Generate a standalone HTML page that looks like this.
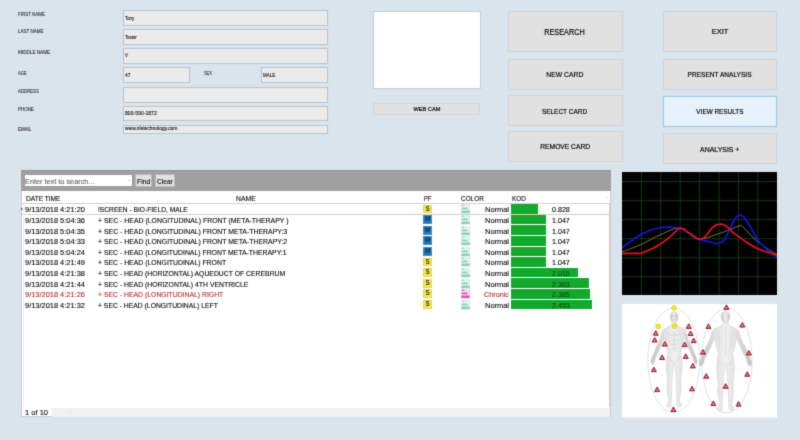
<!DOCTYPE html><html><head><meta charset="utf-8"><title>Card</title><style>
*{box-sizing:border-box;margin:0;padding:0}
html,body{width:800px;height:440px;overflow:hidden}
body{background:#d9e4ed;font-family:"Liberation Sans",sans-serif;color:#222;position:relative}
#root{position:absolute;left:0;top:0;width:800px;height:440px;will-change:transform;filter:url(#sb);background:#d9e4ed}
.a{position:absolute;white-space:nowrap}
.t{display:inline-block;white-space:nowrap}
.lbl{font-size:5px;color:#333;line-height:6px;-webkit-text-stroke:0.12px #333}
.fld{background:#ebebeb;border:1px solid #bac2cd}
.ft{font-size:4.7px;color:#111;-webkit-text-stroke:0.1px #111;line-height:6px}
.btn{background:#e1e1e1;border:1px solid #d0d5da}
.btn.sel{background:#e5f1fb;border-color:#9cc5e8}
.bt{color:#000;text-align:center;-webkit-text-stroke:0.18px #000}
.g{font-size:7.3px;line-height:10px;color:#000;-webkit-text-stroke:0.1px currentColor}
.red{color:#b02a2a}
</style></head><body><svg width="0" height="0" style="position:absolute"><filter id="sb" x="0" y="0" width="100%" height="100%" color-interpolation-filters="sRGB"><feConvolveMatrix order="3" kernelMatrix="0.0196 0.1008 0.0196 0.1008 0.5184 0.1008 0.0196 0.1008 0.0196" divisor="1" edgeMode="duplicate" preserveAlpha="true"/></filter></svg><div id="root">
<div class="a lbl" style="left:18.1px;top:11.30px"><span class="t" style="transform-origin:left center;transform:scaleX(0.8906)">FIRST NAME</span></div>
<div class="a lbl" style="left:18.1px;top:28.30px"><span class="t" style="transform-origin:left center;transform:scaleX(0.9062)">LAST NAME</span></div>
<div class="a lbl" style="left:18.1px;top:49.30px"><span class="t" style="transform-origin:left center;transform:scaleX(0.9242)">MIDDLE NAME</span></div>
<div class="a lbl" style="left:18.1px;top:70.30px"><span class="t" style="transform-origin:left center;transform:scaleX(0.8047)">AGE</span></div>
<div class="a lbl" style="left:18.1px;top:88.30px"><span class="t" style="transform-origin:left center;transform:scaleX(0.8641)">ADDRESS</span></div>
<div class="a lbl" style="left:18.1px;top:106.30px"><span class="t" style="transform-origin:left center;transform:scaleX(0.8886)">PHONE</span></div>
<div class="a lbl" style="left:18.1px;top:126.30px"><span class="t" style="transform-origin:left center;transform:scaleX(0.8857)">EMAIL</span></div>
<div class="a lbl" style="left:204.3px;top:70.30px"><span class="t" style="transform-origin:left center;transform:scaleX(0.7688)">SEX</span></div>
<div class="a fld" style="left:123.3px;top:10.4px;width:204.4px;height:15.2px"></div>
<div class="a fld" style="left:123.3px;top:29.4px;width:204.4px;height:15.2px"></div>
<div class="a fld" style="left:123.3px;top:47.5px;width:204.4px;height:16px"></div>
<div class="a fld" style="left:123.3px;top:66.8px;width:67px;height:16px"></div>
<div class="a fld" style="left:260.9px;top:66.8px;width:66.8px;height:16px"></div>
<div class="a fld" style="left:123.3px;top:86.5px;width:204.4px;height:16.2px"></div>
<div class="a fld" style="left:123.3px;top:105.8px;width:204.4px;height:15.7px"></div>
<div class="a fld" style="left:123.3px;top:124.5px;width:204.4px;height:9.1px"></div>
<div class="a ft" style="left:125.2px;top:15.80px"><span class="t" style="transform-origin:left center;transform:scaleX(0.9186)">Tony</span></div>
<div class="a ft" style="left:125.2px;top:34.80px"><span class="t" style="transform-origin:left center;transform:scaleX(0.9244)">Tester</span></div>
<div class="a ft" style="left:125.2px;top:52.80px"><span class="t" style="transform-origin:left center;transform:scaleX(0.9234)">V</span></div>
<div class="a ft" style="left:124.9px;top:72.80px"><span class="t" style="transform-origin:left center;transform:scaleX(1.0347)">47</span></div>
<div class="a ft" style="left:262.8px;top:72.80px"><span class="t" style="transform-origin:left center;transform:scaleX(0.9557)">MALE</span></div>
<div class="a ft" style="left:124.9px;top:110.80px"><span class="t" style="transform-origin:left center;transform:scaleX(1.0889)">800-590-1872</span></div>
<div class="a ft" style="left:124.9px;top:125.80px"><span class="t" style="transform-origin:left center;transform:scaleX(1.0566)">www.nlstechnology.com</span></div>
<div class="a" style="left:373px;top:11.4px;width:107.8px;height:78.1px;background:#fff;border:0.9px solid #c6ccd3"></div>
<div class="a btn" style="left:372.7px;top:102.7px;width:107.5px;height:12px"></div>
<div class="a bt" style="left:366.4px;width:120px;top:104.30px;font-size:5.4px;line-height:10px"><span class="t" style="transform-origin:center center;transform:scaleX(1.0479)">WEB CAM</span></div>
<div class="a btn" style="left:508px;top:10.8px;width:114.6px;height:41.2px"></div>
<div class="a bt" style="left:504.7px;width:120px;top:27.30px;font-size:8.8px;line-height:10px"><span class="t" style="transform-origin:center center;transform:scaleX(0.8304)">RESEARCH</span></div>
<div class="a btn" style="left:508px;top:58.7px;width:114.6px;height:31px"></div>
<div class="a bt" style="left:504.7px;width:120px;top:69.80px;font-size:7.3px;line-height:10px"><span class="t" style="transform-origin:center center;transform:scaleX(0.9337)">NEW CARD</span></div>
<div class="a btn" style="left:508px;top:95.4px;width:114.6px;height:30.8px"></div>
<div class="a bt" style="left:504.5px;width:120px;top:106.80px;font-size:7.3px;line-height:10px"><span class="t" style="transform-origin:center center;transform:scaleX(0.8868)">SELECT CARD</span></div>
<div class="a btn" style="left:508px;top:131.3px;width:114.6px;height:30.4px"></div>
<div class="a bt" style="left:504.7px;width:120px;top:141.80px;font-size:7.3px;line-height:10px"><span class="t" style="transform-origin:center center;transform:scaleX(0.9167)">REMOVE CARD</span></div>
<div class="a btn" style="left:662.8px;top:10.8px;width:114.2px;height:41px"></div>
<div class="a bt" style="left:659.8px;width:120px;top:26.80px;font-size:7.3px;line-height:10px"><span class="t" style="transform-origin:center center;transform:scaleX(1.0235)">EXIT</span></div>
<div class="a btn" style="left:662.8px;top:58.7px;width:114.2px;height:31px"></div>
<div class="a bt" style="left:659.9px;width:120px;top:69.80px;font-size:7.3px;line-height:10px"><span class="t" style="transform-origin:center center;transform:scaleX(0.8986)">PRESENT ANALYSIS</span></div>
<div class="a btn sel" style="left:662.8px;top:95.5px;width:114.2px;height:31.4px"></div>
<div class="a bt" style="left:659.9px;width:120px;top:106.80px;font-size:7.3px;line-height:10px"><span class="t" style="transform-origin:center center;transform:scaleX(0.8755)">VIEW RESULTS</span></div>
<div class="a btn" style="left:662.8px;top:133.3px;width:114.2px;height:31px"></div>
<div class="a bt" style="left:659.6px;width:120px;top:144.80px;font-size:7.3px;line-height:10px"><span class="t" style="transform-origin:center center;transform:scaleX(0.9508)">ANALYSIS +</span></div>
<div class="a" style="left:20.5px;top:169.5px;width:590px;height:247.3px;background:#fff;border:1px solid #c5ccd6;border-top:none"></div>
<div class="a" style="left:20.5px;top:169.5px;width:590px;height:21.8px;background:#a0a0a0;border-top:1px solid #8f969d"></div>
<div class="a" style="left:24px;top:174.4px;width:108.9px;height:12.6px;background:#fff;border:1px solid #9a9a9a"></div>
<div class="a g" style="left:25px;top:176.80px;color:#5e5e5e"><span class="t" style="transform-origin:left center;transform:scaleX(1.0020)">Enter text to search...</span></div>
<div class="a" style="left:127.6px;top:179.8px;width:0;height:0;border-left:1.6px solid transparent;border-right:1.6px solid transparent;border-top:1.8px solid #aaa"></div>
<div class="a" style="left:134.7px;top:174px;width:17.8px;height:13.2px;background:#e2e2e2;border:1px solid #b9b9b9"></div>
<div class="a g" style="left:136.75px;top:176.80px"><span class="t" style="transform-origin:left center;transform:scaleX(0.9329)">Find</span></div>
<div class="a" style="left:155.2px;top:174px;width:19.8px;height:13.2px;background:#e2e2e2;border:1px solid #b9b9b9"></div>
<div class="a g" style="left:156.75px;top:176.80px"><span class="t" style="transform-origin:left center;transform:scaleX(0.9032)">Clear</span></div>
<div class="a g" style="left:25.5px;top:193.8px"><span class="t" style="transform-origin:left center;transform:scaleX(0.9020)">DATE TIME</span></div>
<div class="a g" style="left:236.2px;top:193.8px"><span class="t" style="transform-origin:left center;transform:scaleX(0.9339)">NAME</span></div>
<div class="a g" style="left:424.2px;top:193.8px"><span class="t" style="transform-origin:left center;transform:scaleX(0.8040)">PF</span></div>
<div class="a g" style="left:460.6px;top:193.8px"><span class="t" style="transform-origin:left center;transform:scaleX(0.8785)">COLOR</span></div>
<div class="a g" style="left:512px;top:193.8px"><span class="t" style="transform-origin:left center;transform:scaleX(0.8854)">KOD</span></div>
<div class="a" style="left:606px;top:196.6px;width:0;height:0;border-top:1.3px solid transparent;border-bottom:1.3px solid transparent;border-right:1.6px solid #c4c4c4"></div>
<div class="a g" style="left:24.5px;top:204.80px"><span class="t" style="transform-origin:left center;transform:scaleX(1.0180)">9/13/2018 4:21:20</span></div>
<div class="a g" style="left:97.8px;top:204.80px"><span class="t" style="transform-origin:left center;transform:scaleX(0.9114)">!SCREEN - BIO-FIELD, MALE</span></div>
<div class="a" style="left:423.3px;top:204.60px;width:8.7px;height:8.8px;background:#f6ea48;border:1px solid #e3d655;font-size:6.4px;font-weight:bold;line-height:6.9px;text-align:center;color:#333">S</div>
<svg class="a" style="left:460.8px;top:204.40px" width="9" height="10" viewBox="0 0 9 10"><rect width="9" height="10" fill="#e3f3ee"/><rect x="0.8" y="0.6" width="2.4" height="1.1" fill="#86d0b4"/><rect x="0.8" y="3.6" width="5.6" height="1.7" fill="#86d0b4"/><rect x="0.3" y="6.6" width="8.6" height="2.3" fill="#86d0b4"/><rect x="8.6" y="0" width="0.4" height="10" fill="#c9d3d0"/></svg>
<div class="a g" style="left:485.4px;top:204.80px"><span class="t" style="transform-origin:left center;transform:scaleX(1.0206)">Normal</span></div>
<div class="a" style="left:511px;top:204.20px;width:27.3px;height:9.6px;background:#14a82c"></div>
<div class="a g" style="left:551.6px;top:204.80px;color:#000"><span class="t" style="transform-origin:left center;transform:scaleX(0.9745)">0.828</span></div>
<div class="a g" style="left:24.5px;top:215.80px"><span class="t" style="transform-origin:left center;transform:scaleX(1.0180)">9/13/2018 5:04:36</span></div>
<div class="a g" style="left:97.8px;top:215.80px"><span class="t" style="transform-origin:left center;transform:scaleX(0.9464)">+ SEC - HEAD (LONGITUDINAL) FRONT (META-THERAPY )</span></div>
<div class="a" style="left:423.3px;top:215.20px;width:8.7px;height:8.8px;background:#2679bb;border:1px solid #3a8fc8;font-size:6.4px;font-weight:bold;line-height:6.9px;text-align:center;color:#10324f">M</div>
<svg class="a" style="left:460.8px;top:215.00px" width="9" height="10" viewBox="0 0 9 10"><rect width="9" height="10" fill="#e3f3ee"/><rect x="0.8" y="0.6" width="2.4" height="1.1" fill="#86d0b4"/><rect x="0.8" y="3.6" width="5.6" height="1.7" fill="#86d0b4"/><rect x="0.3" y="6.6" width="8.6" height="2.3" fill="#86d0b4"/><rect x="8.6" y="0" width="0.4" height="10" fill="#c9d3d0"/></svg>
<div class="a g" style="left:485.4px;top:215.80px"><span class="t" style="transform-origin:left center;transform:scaleX(1.0206)">Normal</span></div>
<div class="a" style="left:511px;top:214.80px;width:34.6px;height:9.6px;background:#14a82c"></div>
<div class="a g" style="left:551.6px;top:215.80px;color:#000"><span class="t" style="transform-origin:left center;transform:scaleX(0.9745)">1.047</span></div>
<div class="a g" style="left:24.5px;top:226.80px"><span class="t" style="transform-origin:left center;transform:scaleX(1.0180)">9/13/2018 5:04:35</span></div>
<div class="a g" style="left:97.8px;top:226.80px"><span class="t" style="transform-origin:left center;transform:scaleX(0.9450)">+ SEC - HEAD (LONGITUDINAL) FRONT META-THERAPY:3</span></div>
<div class="a" style="left:423.3px;top:225.80px;width:8.7px;height:8.8px;background:#2679bb;border:1px solid #3a8fc8;font-size:6.4px;font-weight:bold;line-height:6.9px;text-align:center;color:#10324f">M</div>
<svg class="a" style="left:460.8px;top:225.60px" width="9" height="10" viewBox="0 0 9 10"><rect width="9" height="10" fill="#e3f3ee"/><rect x="0.8" y="0.6" width="2.4" height="1.1" fill="#86d0b4"/><rect x="0.8" y="3.6" width="5.6" height="1.7" fill="#86d0b4"/><rect x="0.3" y="6.6" width="8.6" height="2.3" fill="#86d0b4"/><rect x="8.6" y="0" width="0.4" height="10" fill="#c9d3d0"/></svg>
<div class="a g" style="left:485.4px;top:226.80px"><span class="t" style="transform-origin:left center;transform:scaleX(1.0206)">Normal</span></div>
<div class="a" style="left:511px;top:225.40px;width:34.6px;height:9.6px;background:#14a82c"></div>
<div class="a g" style="left:551.6px;top:226.80px;color:#000"><span class="t" style="transform-origin:left center;transform:scaleX(0.9745)">1.047</span></div>
<div class="a g" style="left:24.5px;top:236.80px"><span class="t" style="transform-origin:left center;transform:scaleX(1.0180)">9/13/2018 5:04:33</span></div>
<div class="a g" style="left:97.8px;top:236.80px"><span class="t" style="transform-origin:left center;transform:scaleX(0.9450)">+ SEC - HEAD (LONGITUDINAL) FRONT META-THERAPY:2</span></div>
<div class="a" style="left:423.3px;top:236.40px;width:8.7px;height:8.8px;background:#2679bb;border:1px solid #3a8fc8;font-size:6.4px;font-weight:bold;line-height:6.9px;text-align:center;color:#10324f">M</div>
<svg class="a" style="left:460.8px;top:236.20px" width="9" height="10" viewBox="0 0 9 10"><rect width="9" height="10" fill="#e3f3ee"/><rect x="0.8" y="0.6" width="2.4" height="1.1" fill="#86d0b4"/><rect x="0.8" y="3.6" width="5.6" height="1.7" fill="#86d0b4"/><rect x="0.3" y="6.6" width="8.6" height="2.3" fill="#86d0b4"/><rect x="8.6" y="0" width="0.4" height="10" fill="#c9d3d0"/></svg>
<div class="a g" style="left:485.4px;top:236.80px"><span class="t" style="transform-origin:left center;transform:scaleX(1.0206)">Normal</span></div>
<div class="a" style="left:511px;top:236.00px;width:34.6px;height:9.6px;background:#14a82c"></div>
<div class="a g" style="left:551.6px;top:236.80px;color:#000"><span class="t" style="transform-origin:left center;transform:scaleX(0.9745)">1.047</span></div>
<div class="a g" style="left:24.5px;top:247.80px"><span class="t" style="transform-origin:left center;transform:scaleX(1.0180)">9/13/2018 5:04:24</span></div>
<div class="a g" style="left:97.8px;top:247.80px"><span class="t" style="transform-origin:left center;transform:scaleX(0.9420)">+ SEC - HEAD (LONGITUDINAL) FRONT META-THERAPY:1</span></div>
<div class="a" style="left:423.3px;top:247.00px;width:8.7px;height:8.8px;background:#2679bb;border:1px solid #3a8fc8;font-size:6.4px;font-weight:bold;line-height:6.9px;text-align:center;color:#10324f">M</div>
<svg class="a" style="left:460.8px;top:246.80px" width="9" height="10" viewBox="0 0 9 10"><rect width="9" height="10" fill="#e3f3ee"/><rect x="0.8" y="0.6" width="2.4" height="1.1" fill="#86d0b4"/><rect x="0.8" y="3.6" width="5.6" height="1.7" fill="#86d0b4"/><rect x="0.3" y="6.6" width="8.6" height="2.3" fill="#86d0b4"/><rect x="8.6" y="0" width="0.4" height="10" fill="#c9d3d0"/></svg>
<div class="a g" style="left:485.4px;top:247.80px"><span class="t" style="transform-origin:left center;transform:scaleX(1.0206)">Normal</span></div>
<div class="a" style="left:511px;top:246.60px;width:34.6px;height:9.6px;background:#14a82c"></div>
<div class="a g" style="left:551.6px;top:247.80px;color:#000"><span class="t" style="transform-origin:left center;transform:scaleX(0.9745)">1.047</span></div>
<div class="a g" style="left:24.5px;top:257.80px"><span class="t" style="transform-origin:left center;transform:scaleX(1.0180)">9/13/2018 4:21:49</span></div>
<div class="a g" style="left:97.8px;top:257.80px"><span class="t" style="transform-origin:left center;transform:scaleX(0.9417)">+ SEC - HEAD (LONGITUDINAL) FRONT</span></div>
<div class="a" style="left:423.3px;top:257.60px;width:8.7px;height:8.8px;background:#f6ea48;border:1px solid #e3d655;font-size:6.4px;font-weight:bold;line-height:6.9px;text-align:center;color:#333">S</div>
<svg class="a" style="left:460.8px;top:257.40px" width="9" height="10" viewBox="0 0 9 10"><rect width="9" height="10" fill="#e3f3ee"/><rect x="0.8" y="0.6" width="2.4" height="1.1" fill="#86d0b4"/><rect x="0.8" y="3.6" width="5.6" height="1.7" fill="#86d0b4"/><rect x="0.3" y="6.6" width="8.6" height="2.3" fill="#86d0b4"/><rect x="8.6" y="0" width="0.4" height="10" fill="#c9d3d0"/></svg>
<div class="a g" style="left:485.4px;top:257.80px"><span class="t" style="transform-origin:left center;transform:scaleX(1.0206)">Normal</span></div>
<div class="a" style="left:511px;top:257.20px;width:34.6px;height:9.6px;background:#14a82c"></div>
<div class="a g" style="left:551.6px;top:257.80px;color:#000"><span class="t" style="transform-origin:left center;transform:scaleX(0.9745)">1.047</span></div>
<div class="a g" style="left:24.5px;top:268.80px"><span class="t" style="transform-origin:left center;transform:scaleX(1.0180)">9/13/2018 4:21:38</span></div>
<div class="a g" style="left:97.8px;top:268.80px"><span class="t" style="transform-origin:left center;transform:scaleX(0.9369)">+ SEC - HEAD (HORIZONTAL) AQUEDUCT OF CEREBRUM</span></div>
<div class="a" style="left:423.3px;top:268.20px;width:8.7px;height:8.8px;background:#f6ea48;border:1px solid #e3d655;font-size:6.4px;font-weight:bold;line-height:6.9px;text-align:center;color:#333">S</div>
<svg class="a" style="left:460.8px;top:268.00px" width="9" height="10" viewBox="0 0 9 10"><rect width="9" height="10" fill="#e3f3ee"/><rect x="0.8" y="0.6" width="2.4" height="1.1" fill="#86d0b4"/><rect x="0.8" y="3.6" width="5.6" height="1.7" fill="#86d0b4"/><rect x="0.3" y="6.6" width="8.6" height="2.3" fill="#86d0b4"/><rect x="8.6" y="0" width="0.4" height="10" fill="#c9d3d0"/></svg>
<div class="a g" style="left:485.4px;top:268.80px"><span class="t" style="transform-origin:left center;transform:scaleX(1.0206)">Normal</span></div>
<div class="a" style="left:511px;top:267.80px;width:66.5px;height:9.6px;background:#14a82c"></div>
<div class="a g" style="left:551.6px;top:268.80px;color:#0a4f14"><span class="t" style="transform-origin:left center;transform:scaleX(0.9745)">2.015</span></div>
<div class="a g" style="left:24.5px;top:279.80px"><span class="t" style="transform-origin:left center;transform:scaleX(1.0180)">9/13/2018 4:21:44</span></div>
<div class="a g" style="left:97.8px;top:279.80px"><span class="t" style="transform-origin:left center;transform:scaleX(0.9381)">+ SEC - HEAD (HORIZONTAL) 4TH VENTRICLE</span></div>
<div class="a" style="left:423.3px;top:278.80px;width:8.7px;height:8.8px;background:#f6ea48;border:1px solid #e3d655;font-size:6.4px;font-weight:bold;line-height:6.9px;text-align:center;color:#333">S</div>
<svg class="a" style="left:460.8px;top:278.60px" width="9" height="10" viewBox="0 0 9 10"><rect width="9" height="10" fill="#e3f3ee"/><rect x="0.8" y="0.6" width="2.4" height="1.1" fill="#86d0b4"/><rect x="0.8" y="3.6" width="5.6" height="1.7" fill="#86d0b4"/><rect x="0.3" y="6.6" width="8.6" height="2.3" fill="#86d0b4"/><rect x="8.6" y="0" width="0.4" height="10" fill="#c9d3d0"/></svg>
<div class="a g" style="left:485.4px;top:279.80px"><span class="t" style="transform-origin:left center;transform:scaleX(1.0206)">Normal</span></div>
<div class="a" style="left:511px;top:278.40px;width:78.0px;height:9.6px;background:#14a82c"></div>
<div class="a g" style="left:551.6px;top:279.80px;color:#0a4f14"><span class="t" style="transform-origin:left center;transform:scaleX(0.9745)">2.363</span></div>
<div class="a g red" style="left:24.5px;top:289.80px"><span class="t" style="transform-origin:left center;transform:scaleX(1.0180)">9/13/2018 4:21:26</span></div>
<div class="a g red" style="left:97.8px;top:289.80px"><span class="t" style="transform-origin:left center;transform:scaleX(0.9379)">+ SEC - HEAD (LONGITUDINAL) RIGHT</span></div>
<div class="a" style="left:423.3px;top:289.40px;width:8.7px;height:8.8px;background:#f6ea48;border:1px solid #e3d655;font-size:6.4px;font-weight:bold;line-height:6.9px;text-align:center;color:#333">S</div>
<svg class="a" style="left:460.8px;top:289.20px" width="9" height="10" viewBox="0 0 9 10"><rect width="9" height="10" fill="#f4d9ef"/><rect x="0.8" y="0.6" width="2.4" height="1.1" fill="#dc4fb4"/><rect x="0.8" y="3.6" width="5.6" height="1.7" fill="#dc4fb4"/><rect x="0.3" y="6.6" width="8.6" height="2.3" fill="#dc4fb4"/><rect x="8.6" y="0" width="0.4" height="10" fill="#c9d3d0"/></svg>
<div class="a g red" style="left:484.4px;top:289.80px"><span class="t" style="transform-origin:left center;transform:scaleX(0.9938)">Chronic</span></div>
<div class="a" style="left:511px;top:289.00px;width:78.7px;height:9.6px;background:#14a82c"></div>
<div class="a g" style="left:551.6px;top:289.80px;color:#0a4f14"><span class="t" style="transform-origin:left center;transform:scaleX(0.9745)">2.385</span></div>
<div class="a g" style="left:24.5px;top:300.80px"><span class="t" style="transform-origin:left center;transform:scaleX(1.0180)">9/13/2018 4:21:32</span></div>
<div class="a g" style="left:97.8px;top:300.80px"><span class="t" style="transform-origin:left center;transform:scaleX(0.9306)">+ SEC - HEAD (LONGITUDINAL) LEFT</span></div>
<div class="a" style="left:423.3px;top:300.00px;width:8.7px;height:8.8px;background:#f6ea48;border:1px solid #e3d655;font-size:6.4px;font-weight:bold;line-height:6.9px;text-align:center;color:#333">S</div>
<svg class="a" style="left:460.8px;top:299.80px" width="9" height="10" viewBox="0 0 9 10"><rect width="9" height="10" fill="#e3f3ee"/><rect x="0.8" y="0.6" width="2.4" height="1.1" fill="#86d0b4"/><rect x="0.8" y="3.6" width="5.6" height="1.7" fill="#86d0b4"/><rect x="0.3" y="6.6" width="8.6" height="2.3" fill="#86d0b4"/><rect x="8.6" y="0" width="0.4" height="10" fill="#c9d3d0"/></svg>
<div class="a g" style="left:485.4px;top:300.80px"><span class="t" style="transform-origin:left center;transform:scaleX(1.0206)">Normal</span></div>
<div class="a" style="left:511px;top:299.60px;width:80.9px;height:9.6px;background:#14a82c"></div>
<div class="a g" style="left:551.6px;top:300.80px;color:#0a4f14"><span class="t" style="transform-origin:left center;transform:scaleX(0.9745)">2.453</span></div>
<div class="a" style="left:21px;top:203.2px;width:589px;height:1px;background:#d0d0d0"></div>
<div class="a" style="left:21px;top:214.1px;width:589px;height:1px;background:#cfcfcf"></div>
<div class="a" style="left:21.3px;top:208.4px;width:0;height:0;border-top:1.5px solid transparent;border-bottom:1.5px solid transparent;border-left:2px solid #333"></div>
<div class="a" style="left:21.3px;top:197px;width:0;height:0;border-top:1.3px solid transparent;border-bottom:1.3px solid transparent;border-left:1.6px solid #bbb"></div>
<div class="a" style="left:22.6px;top:204px;width:1px;height:203px;background:#f0f0f0"></div>
<div class="a" style="left:608.6px;top:204px;width:1.2px;height:203px;background:#f0c4c4"></div>
<div class="a" style="left:52px;top:407.5px;width:558px;height:9px;background:#f0f0f0"></div>
<div class="a g" style="left:24.5px;top:407.80px"><span class="t" style="transform-origin:left center;transform:scaleX(1.0301)">1 of 10</span></div>
<div class="a" style="left:69px;top:410.8px;width:0;height:0;border-top:1.3px solid transparent;border-bottom:1.3px solid transparent;border-left:1.6px solid #c8c8c8"></div>
<svg class="a" style="left:621.75px;top:171.75px" width="155.25" height="123.65" viewBox="0 0 155.25 123.65"><rect width="155.25" height="123.65" fill="#000"/><path d="M19.41,0V123.65M38.81,0V123.65M58.22,0V123.65M77.62,0V123.65M97.03,0V123.65M116.44,0V123.65M135.84,0V123.65M0,9.60H155.25M0,28.65H155.25M0,47.70H155.25M0,66.75H155.25M0,85.80H155.25M0,104.85H155.25" stroke="#1f4d1f" stroke-width="0.7" fill="none"/><path d="M0.0,79.8C3.2,78.6 12.8,75.3 19.3,72.4C25.9,69.5 32.8,65.0 39.3,62.3C45.8,59.6 52.2,55.4 58.3,56.2C64.4,56.9 69.6,66.0 76.1,66.9C82.6,67.8 90.7,63.5 97.6,61.4C104.5,59.2 113.4,54.9 117.5,54.0C121.6,53.1 119.1,53.5 122.1,56.2C125.2,58.8 130.4,65.5 135.9,70.0C141.5,74.4 152.0,80.7 155.3,82.8" stroke="#90902e" stroke-width="0.85" fill="none"/><path d="M0.0,76.1C1.4,75.0 5.4,71.6 8.6,69.3C11.8,67.0 15.8,64.2 19.3,62.3C22.9,60.3 26.7,58.8 30.1,57.7C33.4,56.6 36.2,55.9 39.3,55.5C42.3,55.1 45.3,55.1 48.5,55.2C51.7,55.3 55.2,55.1 58.3,56.2C61.4,57.2 63.9,59.6 66.9,61.4C69.9,63.2 73.0,65.6 76.1,66.9C79.2,68.2 82.0,68.6 85.3,69.3C88.6,70.1 93.2,71.6 96.0,71.5C98.9,71.3 100.1,71.0 102.2,68.4C104.2,65.9 106.5,59.7 108.3,56.2C110.1,52.6 111.4,49.1 112.9,46.9C114.5,44.7 116.0,43.2 117.5,43.0C119.1,42.7 120.3,43.5 122.1,45.4C123.9,47.4 126.0,50.8 128.3,54.6C130.6,58.5 133.4,64.8 135.9,68.4C138.5,72.0 140.4,73.3 143.6,76.1C146.8,78.9 153.3,83.8 155.3,85.3" stroke="#1414e6" stroke-width="1.7" fill="none" stroke-linecap="round"/><path d="M0.0,81.3L19.3,81.3C21.1,80.5 26.7,78.3 30.1,76.7C33.4,75.1 36.2,73.5 39.3,71.5C42.3,69.4 45.3,67.0 48.5,64.4C51.7,61.9 55.2,56.8 58.3,56.2C61.4,55.5 63.9,59.0 66.9,60.8C69.9,62.5 73.5,66.1 76.1,66.9C78.7,67.7 79.7,67.4 82.2,65.4C84.8,63.3 88.9,56.8 91.4,54.6C94.0,52.4 95.5,52.3 97.6,52.2C99.6,52.0 101.4,52.3 103.7,53.7C106.0,55.1 108.3,58.3 111.4,60.8C114.5,63.2 118.3,65.9 122.1,68.4C126.0,71.0 130.3,74.1 134.4,76.1C138.5,78.1 143.2,79.6 146.7,80.7C150.1,81.8 153.8,82.5 155.3,82.8" stroke="#f01020" stroke-width="1.7" fill="none" stroke-linecap="round"/></svg>
<svg class="a" style="left:621.75px;top:304.2px" width="155.25" height="113.5" viewBox="621.75 304.2 155.25 113.5"><defs><linearGradient id="bg" x1="0" x2="1" y1="0" y2="0"><stop offset="0" stop-color="#c2c2c2"/><stop offset="0.3" stop-color="#e0e0e0"/><stop offset="0.5" stop-color="#f0f0f0"/><stop offset="0.7" stop-color="#e0e0e0"/><stop offset="1" stop-color="#c2c2c2"/></linearGradient><radialGradient id="tg" cx="0.5" cy="0.65" r="0.45"><stop offset="0" stop-color="#f0a0a4"/><stop offset="1" stop-color="#b83045"/></radialGradient></defs><rect x="621.75" y="304.2" width="155.25" height="113.5" fill="#fff"/><ellipse cx="673.5" cy="360.6" rx="25.9" ry="52.4" fill="none" stroke="#a9cdea" stroke-width="0.55"/><ellipse cx="726.6" cy="360.8" rx="25.3" ry="52.6" fill="none" stroke="#a9cdea" stroke-width="0.55"/><path d="M676.1,321.3C676.9,321.8 675.7,323.4 676.3,324.4C676.9,325.4 678.6,326.3 679.9,327.1C681.2,327.9 682.9,328.3 683.9,329.1C684.9,329.9 685.3,330.5 685.8,331.8C686.3,333.1 686.6,335.1 687.1,336.8C687.6,338.5 688.2,340.3 688.9,341.8C689.6,343.3 690.4,344.1 691.2,345.9C692.0,347.7 692.9,350.8 693.7,352.8C694.5,354.8 695.5,356.4 696.0,357.8C696.5,359.2 697.0,360.2 697.0,361.3C697.0,362.4 696.3,364.3 695.7,364.4C695.1,364.5 694.0,362.9 693.5,361.8C693.0,360.7 693.2,359.6 692.5,357.8C691.8,356.1 690.5,353.4 689.5,351.3C688.5,349.2 687.6,347.4 686.7,345.3C685.8,343.2 684.7,339.7 684.1,338.8C683.5,337.9 683.4,338.8 683.1,339.8C682.8,340.8 682.8,342.7 682.3,344.8C681.8,346.9 680.5,350.4 680.3,352.7C680.1,355.0 681.0,356.6 681.2,358.8C681.4,361.0 681.7,363.3 681.7,365.8C681.7,368.3 681.3,371.1 681.1,373.8C680.9,376.5 680.4,379.3 680.4,381.8C680.4,384.3 681.0,386.5 680.9,388.8C680.8,391.1 680.2,393.8 679.9,395.8C679.6,397.8 678.9,399.3 679.1,400.8C679.3,402.3 681.1,403.8 681.3,404.8C681.5,405.8 681.0,406.5 680.3,406.8C679.6,407.1 677.7,407.4 677.2,406.4C676.6,405.4 677.1,402.9 677.0,400.8C676.9,398.7 676.5,396.0 676.4,393.8C676.3,391.6 676.2,389.8 676.2,387.8C676.2,385.8 676.3,384.1 676.2,381.8C676.1,379.5 675.7,376.3 675.4,373.8C675.1,371.3 674.9,368.5 674.6,366.8C674.4,365.1 674.1,363.8 673.9,363.8C673.7,363.8 673.4,365.1 673.2,366.8C672.9,368.5 672.7,371.3 672.4,373.8C672.1,376.3 671.7,379.5 671.6,381.8C671.5,384.1 671.6,385.8 671.6,387.8C671.6,389.8 671.5,391.6 671.4,393.8C671.3,396.0 670.9,398.7 670.8,400.8C670.7,402.9 671.1,405.4 670.6,406.4C670.1,407.4 668.2,407.1 667.5,406.8C666.8,406.5 666.3,405.8 666.5,404.8C666.7,403.8 668.5,402.3 668.7,400.8C668.9,399.3 668.2,397.8 667.9,395.8C667.6,393.8 667.0,391.1 666.9,388.8C666.8,386.5 667.4,384.3 667.4,381.8C667.4,379.3 666.9,376.5 666.7,373.8C666.5,371.1 666.1,368.3 666.1,365.8C666.1,363.3 666.4,361.0 666.6,358.8C666.8,356.6 667.7,355.0 667.5,352.7C667.3,350.4 666.0,346.9 665.5,344.8C665.0,342.7 665.0,340.8 664.7,339.8C664.4,338.8 664.3,337.9 663.7,338.8C663.1,339.7 662.0,343.2 661.1,345.3C660.2,347.4 659.3,349.2 658.3,351.3C657.3,353.4 656.0,356.1 655.3,357.8C654.6,359.6 654.8,360.7 654.3,361.8C653.8,362.9 652.7,364.5 652.1,364.4C651.5,364.3 650.8,362.4 650.8,361.3C650.8,360.2 651.2,359.2 651.8,357.8C652.3,356.4 653.3,354.8 654.1,352.8C654.9,350.8 655.8,347.7 656.6,345.9C657.4,344.1 658.2,343.3 658.9,341.8C659.6,340.3 660.2,338.5 660.7,336.8C661.2,335.1 661.5,333.1 662.0,331.8C662.5,330.5 662.9,329.9 663.9,329.1C664.9,328.3 666.6,327.9 667.9,327.1C669.2,326.3 670.9,325.4 671.5,324.4C672.1,323.4 670.9,321.8 671.7,321.3C672.5,320.8 675.3,320.8 676.1,321.3Z" fill="url(#bg)" stroke="#c4c4c4" stroke-width="0.45"/><ellipse cx="673.9" cy="317.2" rx="3.8" ry="5.5" fill="url(#bg)" stroke="#c4c4c4" stroke-width="0.45"/><path d="M727.8,321.2C728.7,321.8 727.3,323.5 728.0,324.5C728.7,325.5 730.6,326.5 732.1,327.3C733.5,328.1 735.5,328.6 736.6,329.4C737.7,330.2 738.1,330.9 738.7,332.2C739.3,333.5 739.6,335.7 740.2,337.4C740.8,339.2 741.5,341.1 742.2,342.7C743.0,344.2 743.9,345.0 744.8,346.9C745.8,348.9 746.8,352.1 747.7,354.1C748.6,356.2 749.7,357.9 750.3,359.4C750.9,360.9 751.5,361.9 751.4,363.0C751.3,364.2 750.6,366.2 749.9,366.3C749.3,366.4 748.1,364.7 747.4,363.6C746.8,362.4 747.1,361.2 746.3,359.4C745.6,357.5 744.0,354.8 742.9,352.6C741.8,350.4 740.8,348.5 739.8,346.3C738.7,344.1 737.5,340.5 736.8,339.5C736.1,338.6 736.0,339.5 735.7,340.6C735.4,341.6 735.3,343.5 734.8,345.8C734.3,348.0 732.7,351.6 732.5,354.0C732.3,356.5 733.3,358.1 733.5,360.4C733.8,362.7 734.1,365.1 734.1,367.7C734.1,370.3 733.7,373.3 733.4,376.1C733.2,378.9 732.7,381.8 732.6,384.4C732.6,387.1 733.3,389.3 733.2,391.8C733.1,394.2 732.4,397.0 732.1,399.1C731.7,401.2 730.9,402.7 731.2,404.3C731.4,405.9 733.4,407.4 733.7,408.5C733.9,409.5 733.3,410.3 732.5,410.6C731.8,410.9 729.7,411.2 729.0,410.2C728.4,409.1 729.0,406.5 728.8,404.3C728.7,402.1 728.3,399.3 728.1,397.0C728.0,394.7 727.9,392.8 727.9,390.7C727.9,388.6 728.0,386.9 727.9,384.4C727.7,382.0 727.3,378.7 727.0,376.1C726.7,373.5 726.4,370.5 726.1,368.8C725.8,367.0 725.6,365.6 725.3,365.6C725.0,365.6 724.8,367.0 724.5,368.8C724.2,370.5 723.9,373.5 723.6,376.1C723.3,378.7 722.9,382.0 722.7,384.4C722.6,386.9 722.7,388.6 722.7,390.7C722.7,392.8 722.6,394.7 722.5,397.0C722.3,399.3 721.9,402.1 721.8,404.3C721.6,406.5 722.2,409.1 721.6,410.2C720.9,411.2 718.8,410.9 718.1,410.6C717.3,410.3 716.7,409.5 716.9,408.5C717.2,407.4 719.2,405.9 719.4,404.3C719.7,402.7 718.9,401.2 718.5,399.1C718.2,397.0 717.5,394.2 717.4,391.8C717.3,389.3 718.0,387.1 718.0,384.4C717.9,381.8 717.4,378.9 717.2,376.1C716.9,373.3 716.5,370.3 716.5,367.7C716.5,365.1 716.8,362.7 717.1,360.4C717.3,358.1 718.3,356.5 718.1,354.0C717.9,351.6 716.3,348.0 715.8,345.8C715.3,343.5 715.2,341.6 714.9,340.6C714.6,339.5 714.5,338.6 713.8,339.5C713.1,340.5 711.9,344.1 710.8,346.3C709.8,348.5 708.8,350.4 707.7,352.6C706.6,354.8 705.0,357.5 704.3,359.4C703.5,361.2 703.8,362.4 703.2,363.6C702.5,364.7 701.3,366.4 700.7,366.3C700.0,366.2 699.3,364.2 699.2,363.0C699.1,361.9 699.7,360.9 700.3,359.4C700.9,357.9 702.0,356.2 702.9,354.1C703.8,352.1 704.8,348.9 705.8,346.9C706.7,345.0 707.6,344.2 708.3,342.7C709.1,341.1 709.8,339.2 710.4,337.4C711.0,335.7 711.3,333.5 711.9,332.2C712.5,330.9 712.9,330.2 714.0,329.4C715.1,328.6 717.1,328.1 718.5,327.3C720.0,326.5 721.9,325.5 722.6,324.5C723.3,323.5 721.9,321.8 722.8,321.2C723.7,320.7 726.9,320.7 727.8,321.2Z" fill="url(#bg)" stroke="#c4c4c4" stroke-width="0.45"/><ellipse cx="725.3" cy="316.9" rx="4.3" ry="5.7" fill="url(#bg)" stroke="#c4c4c4" stroke-width="0.45"/><path d="M671.3,316.3H676.5M672.6,320H675.2" stroke="#bdbdbd" stroke-width="0.8" fill="none"/><path d="M667,333.5Q670.5,337 673.9,335Q677.3,337 680.8,333.5M673.9,331V352M670.3,340.5H677.5M670.5,344.5H677.3M670.8,348.5H677M668,357Q671,361 673.9,363.5Q676.8,361 679.8,357" stroke="#c6c6c6" stroke-width="0.5" fill="none"/><path d="M725.3,327V357M718.5,361Q722,367.5 725.3,363Q728.6,367.5 732.1,361M717,333Q721,339 719.5,347M733.6,333Q729.6,339 731.1,347" stroke="#c8c8c8" stroke-width="0.5" fill="none"/><path d="M655.5,330.8L658.0,335.4H653.0Z" fill="url(#tg)" stroke="#9c1f33" stroke-width="1" stroke-linejoin="round"/><path d="M654.4,337.6L656.9,342.2H651.9Z" fill="url(#tg)" stroke="#9c1f33" stroke-width="1" stroke-linejoin="round"/><path d="M664.5,341.7L667.0,346.3H662.0Z" fill="url(#tg)" stroke="#9c1f33" stroke-width="1" stroke-linejoin="round"/><path d="M661.8,355.1L664.3,359.7H659.3Z" fill="url(#tg)" stroke="#9c1f33" stroke-width="1" stroke-linejoin="round"/><path d="M653.6,367.3L656.1,371.9H651.1Z" fill="url(#tg)" stroke="#9c1f33" stroke-width="1" stroke-linejoin="round"/><path d="M656.9,387.2L659.4,391.8H654.4Z" fill="url(#tg)" stroke="#9c1f33" stroke-width="1" stroke-linejoin="round"/><path d="M673.2,407.1L675.7,411.7H670.7Z" fill="url(#tg)" stroke="#9c1f33" stroke-width="1" stroke-linejoin="round"/><path d="M688.5,324.0L691.0,328.6H686.0Z" fill="url(#tg)" stroke="#9c1f33" stroke-width="1" stroke-linejoin="round"/><path d="M690.4,331.1L692.9,335.7H687.9Z" fill="url(#tg)" stroke="#9c1f33" stroke-width="1" stroke-linejoin="round"/><path d="M693.4,338.2L695.9,342.8H690.9Z" fill="url(#tg)" stroke="#9c1f33" stroke-width="1" stroke-linejoin="round"/><path d="M684.4,342.3L686.9,346.9H681.9Z" fill="url(#tg)" stroke="#9c1f33" stroke-width="1" stroke-linejoin="round"/><path d="M685.5,354.0L688.0,358.6H683.0Z" fill="url(#tg)" stroke="#9c1f33" stroke-width="1" stroke-linejoin="round"/><path d="M692.6,363.5L695.1,368.1H690.1Z" fill="url(#tg)" stroke="#9c1f33" stroke-width="1" stroke-linejoin="round"/><path d="M691.8,386.4L694.3,391.0H689.3Z" fill="url(#tg)" stroke="#9c1f33" stroke-width="1" stroke-linejoin="round"/><path d="M726.2,305.0L728.7,309.6H723.7Z" fill="url(#tg)" stroke="#9c1f33" stroke-width="1" stroke-linejoin="round"/><path d="M708.2,324.1L710.7,328.7H705.7Z" fill="url(#tg)" stroke="#9c1f33" stroke-width="1" stroke-linejoin="round"/><path d="M742.1,322.7L744.6,327.3H739.6Z" fill="url(#tg)" stroke="#9c1f33" stroke-width="1" stroke-linejoin="round"/><path d="M702.7,349.8L705.2,354.4H700.2Z" fill="url(#tg)" stroke="#9c1f33" stroke-width="1" stroke-linejoin="round"/><path d="M748.6,350.6L751.1,355.2H746.1Z" fill="url(#tg)" stroke="#9c1f33" stroke-width="1" stroke-linejoin="round"/><path d="M706.0,373.8L708.5,378.4H703.5Z" fill="url(#tg)" stroke="#9c1f33" stroke-width="1" stroke-linejoin="round"/><path d="M747.0,371.9L749.5,376.5H744.5Z" fill="url(#tg)" stroke="#9c1f33" stroke-width="1" stroke-linejoin="round"/><path d="M725.4,383.9L727.9,388.5H722.9Z" fill="url(#tg)" stroke="#9c1f33" stroke-width="1" stroke-linejoin="round"/><path d="M713.1,401.1L715.6,405.7H710.6Z" fill="url(#tg)" stroke="#9c1f33" stroke-width="1" stroke-linejoin="round"/><path d="M738.3,401.7L740.8,406.3H735.8Z" fill="url(#tg)" stroke="#9c1f33" stroke-width="1" stroke-linejoin="round"/><circle cx="673.8" cy="308.2" r="2.4" fill="#f7e70e" stroke="#d9c200" stroke-width="0.5"/><circle cx="658" cy="326.7" r="2.4" fill="#f7e70e" stroke="#d9c200" stroke-width="0.5"/><circle cx="674.3" cy="326.4" r="2.4" fill="#f7e70e" stroke="#d9c200" stroke-width="0.5"/></svg>
</div></body></html>
